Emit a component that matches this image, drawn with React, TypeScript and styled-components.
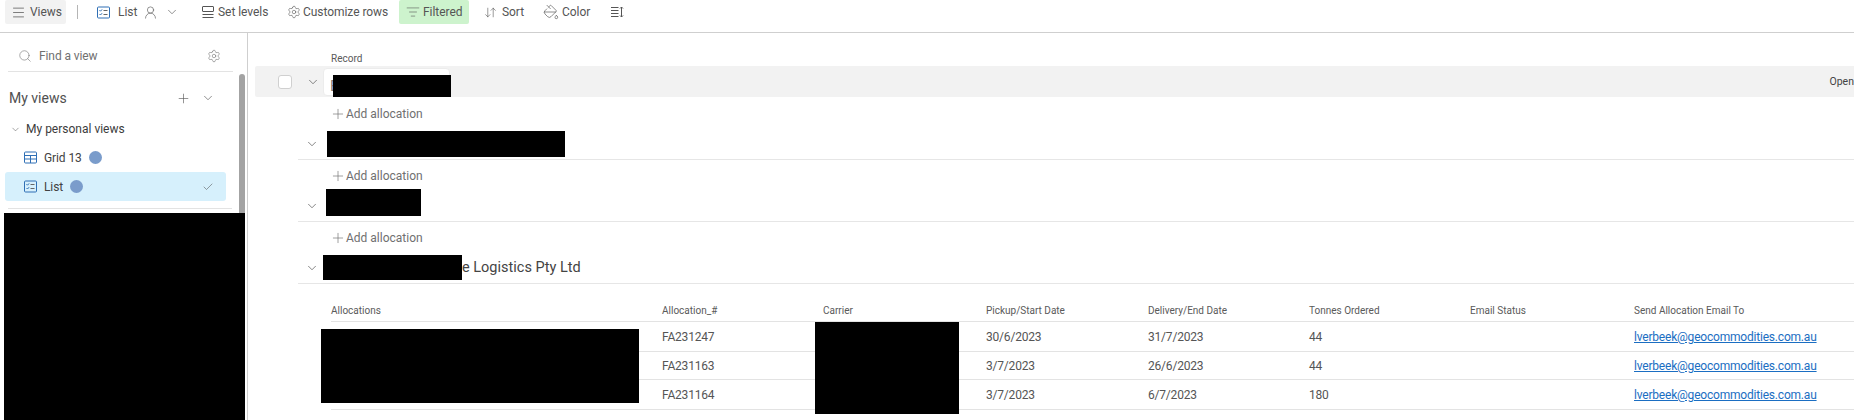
import React from "react";
import styled, { createGlobalStyle } from "styled-components";
import {
  ArrowDownUp,
  Check,
  ChevronDown,
  ListFilter,
  Menu,
  PaintBucket,
  Plus,
  Search,
  Settings,
  UserRound,
} from "lucide-react";

const GlobalStyle = createGlobalStyle`
  html, body {
    margin: 0;
    padding: 0;
    background: #fff;
    overflow: hidden;
  }
  body {
    font-family: Roboto, "Open Sans", "Liberation Sans", sans-serif;
    color: #424242;
  }
`;

const ListIcon = () => (
  <svg width="13" height="13" viewBox="0 0 13 13" fill="none">
    <rect x="0.5" y="1" width="12" height="11" rx="1" stroke="#2f6fb5" />
    <path d="M2.5 4.2l1 1 1.6-1.8M2.5 8l1 1 1.6-1.8" stroke="#2f6fb5" />
    <path d="M6.5 4.5h4M6.5 8.5h4" stroke="#666" />
  </svg>
);

const GridIcon = () => (
  <svg width="13" height="13" viewBox="0 0 13 13" fill="none">
    <rect x="0.5" y="1" width="12" height="11" rx="1" stroke="#2f6fb5" />
    <path d="M0.5 4.5h12M0.5 8h12M6.5 4.5V12" stroke="#2f6fb5" />
  </svg>
);

const LevelsIcon = () => (
  <svg width="14" height="14" viewBox="0 0 14 14" fill="none" stroke="#555">
    <rect x="1.5" y="1.5" width="11" height="5" rx="0.5" />
    <path d="M1.5 9.5h11M1.5 12.5h11" />
  </svg>
);

const DensityIcon = () => (
  <svg width="14" height="14" viewBox="0 0 14 14" fill="none" stroke="#555">
    <path d="M1 2.5h7.5M1 5.5h7.5M1 8.5h7.5M1 11.5h7.5M11.5 2v10M10 3.5l1.5-1.5L13 3.5M10 10.5l1.5 1.5 1.5-1.5" />
  </svg>
);

const Page = styled.div`
  width: 1854px;
  height: 420px;
  overflow: hidden;
  display: flex;
  flex-direction: column;
`;

const Toolbar = styled.header`
  height: 33px;
  flex: none;
  box-sizing: border-box;
  padding-left: 5px;
  border-bottom: 1px solid #cfcfcf;
  display: flex;
  align-items: flex-start;
`;

const ToolItem = styled.div<{ $width: number; $bg?: string; $gap?: number; $pad?: number }>`
  width: ${(p) => p.$width}px;
  height: 24px;
  flex: none;
  box-sizing: border-box;
  padding-left: ${(p) => p.$pad ?? 0}px;
  display: flex;
  align-items: center;
  gap: ${(p) => p.$gap ?? 3}px;
  font-size: 12px;
  letter-spacing: -0.05px;
  color: #555;
  white-space: nowrap;
  border-radius: 2px;
  background: ${(p) => p.$bg ?? "transparent"};
  svg {
    flex: none;
  }
`;

const ToolDivider = styled.span`
  width: 1px;
  height: 14px;
  margin: 5px 19px 0 11px;
  background: #b5b5b5;
  flex: none;
`;

const ToolGap = styled.span<{ $w: number }>`
  width: ${(p) => p.$w}px;
  flex: none;
`;

const Body = styled.div`
  flex: 1;
  display: flex;
  min-height: 0;
`;

const Sidebar = styled.aside`
  width: 248px;
  flex: none;
  box-sizing: border-box;
  border-right: 1px solid #cfcfcf;
  display: flex;
  flex-direction: column;
  position: relative;
`;

const Scrollbar = styled.span`
  position: absolute;
  left: 239px;
  top: 41px;
  width: 6px;
  height: 150px;
  border-radius: 3px;
  background: #a3a3a3;
`;

const SearchRow = styled.div`
  height: 39px;
  flex: none;
  box-sizing: border-box;
  margin: 0 14px 0 8px;
  padding: 7px 12px 0 10px;
  border-bottom: 1px solid #e3e3e3;
  display: flex;
  align-items: center;
  gap: 7px;
  font-size: 12px;
  letter-spacing: -0.1px;
  color: #707070;
`;

const SearchText = styled.span`
  flex: 1;
`;

const ViewsHead = styled.div`
  margin: 15px 32px 0 9px;
  height: 22px;
  display: flex;
  align-items: center;
  gap: 10px;
  color: #555;
  svg {
    flex: none;
  }
`;

const ViewsTitle = styled.span`
  flex: 1;
  font-size: 14px;
  color: #505050;
`;

const SectionHead = styled.div`
  margin: 10px 0 4px 10px;
  height: 20px;
  display: flex;
  align-items: center;
  gap: 5px;
  font-size: 12px;
  color: #3c3c3c;
`;

const ViewRow = styled.div<{ $active?: boolean }>`
  width: 221px;
  height: 29px;
  box-sizing: border-box;
  margin-left: 5px;
  padding: 0 12px 0 19px;
  display: flex;
  align-items: center;
  gap: 7px;
  font-size: 12px;
  letter-spacing: -0.1px;
  color: #424242;
  border-radius: 3px;
  background: ${(p) => (p.$active ? "#d6f0fc" : "transparent")};
`;

const ViewName = styled.span``;

const Dot = styled.span`
  width: 13px;
  height: 13px;
  border-radius: 50%;
  background: #7a9ccb;
`;

const Push = styled.span`
  margin-left: auto;
  display: flex;
`;

const SidebarRule = styled.div`
  height: 1px;
  margin: 7px 15px 4px 8px;
  background: #e3e3e3;
`;

const SidebarBlock = styled.div`
  flex: 1;
  margin: 0 2px 0 4px;
  background: #000;
  z-index: 1;
`;

const Main = styled.main`
  flex: 1;
  min-width: 0;
  display: flex;
  flex-direction: column;
`;

const RecordLabel = styled.div`
  height: 33px;
  flex: none;
  box-sizing: border-box;
  padding: 19px 0 0 83px;
  font-size: 10px;
  line-height: 14px;
  color: #5a5a5a;
`;

const RecordRow = styled.div`
  height: 31px;
  flex: none;
  margin: 0 0 1px 7px;
  display: flex;
  align-items: center;
  background: #f2f2f2;
  border-radius: 2px 0 0 2px;
`;

const CheckBox = styled.span`
  width: 14px;
  height: 14px;
  box-sizing: border-box;
  margin-left: 23px;
  border: 1px solid #d0d0d0;
  border-radius: 3px;
  background: #fff;
`;

const RowChevron = styled.span`
  width: 14px;
  display: flex;
  justify-content: center;
  margin: 0 3px 0 14px;
  color: #444;
`;

const RecordCell = styled.div`
  width: 127px;
  height: 28px;
  box-sizing: border-box;
  padding: 6px 0 0 6px;
  background: #fff;
  border: 1px solid #ececec;
  border-radius: 4px;
  display: flex;
`;

const RecordLead = styled.span`
  width: 3px;
  height: 22px;
  font-size: 15px;
  line-height: 22px;
  color: #777;
`;

const Redact = styled.div<{ $w: number; $h: number; $ml?: number; $mt?: number }>`
  position: relative;
  width: ${(p) => p.$w}px;
  height: ${(p) => p.$h}px;
  margin-left: ${(p) => p.$ml ?? 0}px;
  margin-top: ${(p) => p.$mt ?? 0}px;
  background: #000;
  flex: none;
`;

const Status = styled.span`
  margin-left: auto;
  font-size: 10.5px;
  color: #424242;
`;

const AddRow = styled.div`
  height: 30px;
  flex: none;
  box-sizing: border-box;
  padding: 2px 0 0 82px;
  display: flex;
  align-items: center;
  font-size: 12px;
  color: #707070;
`;

const GroupRow = styled.div`
  height: 32px;
  flex: none;
  box-sizing: border-box;
  margin-left: 50px;
  padding-left: 7px;
  border-bottom: 1px solid #e6e6e6;
  display: flex;
  align-items: center;
`;

const GroupChevron = styled.span`
  width: 14px;
  display: flex;
  justify-content: center;
  color: #444;
`;

const GroupName = styled.span`
  font-size: 14.5px;
  color: #444;
  white-space: nowrap;
`;

const Table = styled.div`
  position: relative;
  margin: 20px 0 0 83px;
  display: grid;
  grid-template-columns: 331px 161px 163px 162px 161px 161px 164px 1fr;
`;

const HeadCell = styled.div`
  height: 18px;
  box-sizing: border-box;
  padding-top: 1px;
  font-size: 10px;
  line-height: 12px;
  color: #5a5a5a;
  border-bottom: 1px solid #e3e3e3;
`;

const Cell = styled.div<{ $h: number }>`
  height: ${(p) => p.$h}px;
  box-sizing: border-box;
  padding-top: 1px;
  display: flex;
  align-items: center;
  font-size: 12px;
  letter-spacing: -0.2px;
  color: #555;
  border-bottom: 1px solid #e3e3e3;
`;

const MailLink = styled.a`
  color: #1b6ec2;
  text-decoration: underline;
`;

const TableRedact = styled.div<{ $l: number; $t: number; $w: number; $h: number }>`
  position: absolute;
  left: ${(p) => p.$l}px;
  top: ${(p) => p.$t}px;
  width: ${(p) => p.$w}px;
  height: ${(p) => p.$h}px;
  background: #000;
`;

const columns = [
  "Allocations",
  "Allocation_#",
  "Carrier",
  "Pickup/Start Date",
  "Delivery/End Date",
  "Tonnes Ordered",
  "Email Status",
  "Send Allocation Email To",
];

const rows = [
  { id: "FA231247", start: "30/6/2023", end: "31/7/2023", tonnes: "44", h: 30 },
  { id: "FA231163", start: "3/7/2023", end: "26/6/2023", tonnes: "44", h: 28 },
  { id: "FA231164", start: "3/7/2023", end: "6/7/2023", tonnes: "180", h: 30 },
];

const Chevron = () => <ChevronDown size={14} strokeWidth={1.1} />;

const AddAllocation = () => (
  <AddRow>
    <Plus size={16} strokeWidth={1} />
    Add allocation
  </AddRow>
);

export default function App() {
  return (
    <Page>
      <GlobalStyle />
      <Toolbar>
        <ToolItem $width={61} $bg="#f2f2f2" $gap={4} $pad={6}>
          <Menu size={15} strokeWidth={1.2} />
          Views
        </ToolItem>
        <ToolDivider />
        <ToolItem $width={80} $gap={0}>
          <ListIcon />
          <ToolGap $w={8} />
          List
          <ToolGap $w={6} />
          <UserRound size={15} strokeWidth={1} />
          <ToolGap $w={7} />
          <Chevron />
        </ToolItem>
        <ToolGap $w={24} />
        <ToolItem $width={64} $gap={3}>
          <LevelsIcon />
          Set levels
        </ToolItem>
        <ToolGap $w={22} />
        <ToolItem $width={97} $gap={2}>
          <Settings size={14} strokeWidth={1} />
          Customize rows
        </ToolItem>
        <ToolGap $w={15} />
        <ToolItem $width={70} $bg="#cdf3cd" $gap={3} $pad={7}>
          <ListFilter size={14} strokeWidth={1} />
          Filtered
        </ToolItem>
        <ToolGap $w={15} />
        <ToolItem $width={37} $gap={5}>
          <ArrowDownUp size={13} strokeWidth={1.1} />
          Sort
        </ToolItem>
        <ToolGap $w={22} />
        <ToolItem $width={46} $gap={3}>
          <PaintBucket size={16} strokeWidth={1} />
          Color
        </ToolItem>
        <ToolGap $w={21} />
        <ToolItem $width={14}>
          <DensityIcon />
        </ToolItem>
      </Toolbar>
      <Body>
        <Sidebar>
          <Scrollbar />
          <SearchRow>
            <Search size={14} strokeWidth={1} />
            <SearchText>Find a view</SearchText>
            <Settings size={14} strokeWidth={1} />
          </SearchRow>
          <ViewsHead>
            <ViewsTitle>My views</ViewsTitle>
            <Plus size={15} strokeWidth={1} />
            <Chevron />
          </ViewsHead>
          <SectionHead>
            <ChevronDown size={11} strokeWidth={1} />
            My personal views
          </SectionHead>
          <ViewRow>
            <GridIcon />
            <ViewName>Grid 13</ViewName>
            <Dot />
          </ViewRow>
          <ViewRow $active>
            <ListIcon />
            <ViewName>List</ViewName>
            <Dot />
            <Push>
              <Check size={12} strokeWidth={1} />
            </Push>
          </ViewRow>
          <SidebarRule />
          <SidebarBlock />
        </Sidebar>
        <Main>
          <RecordLabel>Record</RecordLabel>
          <RecordRow>
            <CheckBox />
            <RowChevron>
              <Chevron />
            </RowChevron>
            <RecordCell>
              <RecordLead>E</RecordLead>
              <Redact $w={118} $h={22} />
            </RecordCell>
            <Status>Open</Status>
          </RecordRow>
          <AddAllocation />
          <GroupRow>
            <GroupChevron>
              <Chevron />
            </GroupChevron>
            <Redact $w={238} $h={26} $ml={8} />
          </GroupRow>
          <AddAllocation />
          <GroupRow>
            <GroupChevron>
              <Chevron />
            </GroupChevron>
            <Redact $w={95} $h={27} $ml={7} $mt={-7} />
          </GroupRow>
          <AddAllocation />
          <GroupRow>
            <GroupChevron>
              <Chevron />
            </GroupChevron>
            <Redact $w={139} $h={25} $ml={4} />
            <GroupName>e Logistics Pty Ltd</GroupName>
          </GroupRow>
          <Table>
            {columns.map((c) => (
              <HeadCell key={c}>{c}</HeadCell>
            ))}
            {rows.map((r) => (
              <React.Fragment key={r.id}>
                <Cell $h={r.h} />
                <Cell $h={r.h}>{r.id}</Cell>
                <Cell $h={r.h} />
                <Cell $h={r.h}>{r.start}</Cell>
                <Cell $h={r.h}>{r.end}</Cell>
                <Cell $h={r.h}>{r.tonnes}</Cell>
                <Cell $h={r.h} />
                <Cell $h={r.h}>
                  <MailLink href="#">lverbeek@geocommodities.com.au</MailLink>
                </Cell>
              </React.Fragment>
            ))}
            <TableRedact $l={-10} $t={25} $w={318} $h={74} />
            <TableRedact $l={484} $t={18} $w={144} $h={92} />
          </Table>
        </Main>
      </Body>
    </Page>
  );
}
